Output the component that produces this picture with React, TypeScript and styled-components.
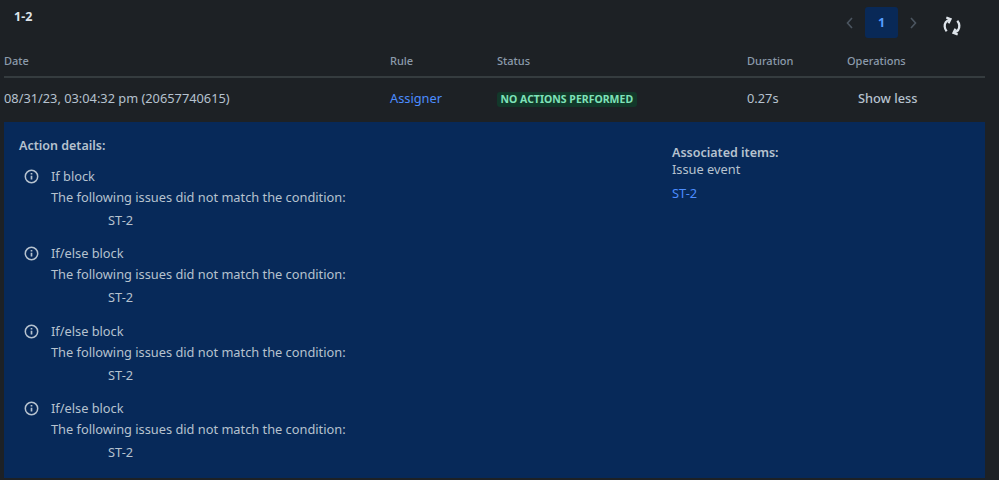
import React from "react";
import styled, { createGlobalStyle } from "styled-components";

const Global = createGlobalStyle`
  html, body { margin: 0; padding: 0; background: #1d2125; }
  body { font-family: "Noto Sans", "Open Sans", sans-serif; color: #b6c2cf; font-size: 12.8px; }
`;

const Page = styled.div`
  width: 999px;
  height: 480px;
  overflow: hidden;
  box-sizing: border-box;
  padding: 0 14px 0 4px;
`;

const TopBar = styled.div`
  display: flex;
  justify-content: space-between;
  height: 52px;
  padding-left: 10px;
`;

const Count = styled.div`
  font-weight: 700;
  font-size: 12.5px;
  line-height: 17px;
  padding-top: 8px;
  color: #dee4ea;
`;

const Pager = styled.div`
  display: flex;
  align-items: flex-start;
  padding-top: 7px;
  padding-right: 23px;
`;

const Arrow = styled.svg`
  width: 16px;
  height: 16px;
  margin-top: 8px;
  fill: none;
  stroke: #4b5560;
  stroke-width: 1.6;
`;

const PageBtn = styled.div`
  width: 33px;
  height: 31px;
  margin: 0 7px 0 7px;
  background: #092957;
  border-radius: 3px;
  color: #579dff;
  font-weight: 700;
  font-size: 12.5px;
  display: flex;
  align-items: center;
  justify-content: center;
`;

const Refresh = styled.svg`
  width: 20px;
  height: 20px;
  margin-left: 21px;
  margin-top: 9px;
  fill: none;
  stroke: #dee4ea;
  stroke-width: 2.3;
`;

const Row = styled.div<{ $head?: boolean }>`
  display: grid;
  box-sizing: border-box;
  grid-template-columns: 386px 107px 250px 100px 138px;
  align-items: center;
  height: ${(p) => (p.$head ? "26px" : "44px")};
  ${(p) =>
    p.$head
      ? "border-bottom: 2px solid #353c3f; font-size: 11px; font-weight: 500; color: #8c9bab;"
      : "font-size: 12.8px; padding-bottom: 4px;"}
`;

const HeadCell = styled.div`
  margin-top: -7px;
`;

const Link = styled.a`
  color: #4c8dff;
  text-decoration: none;
`;

const Lozenge = styled.span`
  display: inline-block;
  background: #12382a;
  color: #7ee2b8;
  font-size: 10.5px;
  font-weight: 700;
  line-height: 15px;
  padding: 0 3.5px;
  border-radius: 3px;
  white-space: nowrap;
`;

const ShowLess = styled.div`
  padding-left: 11px;
  font-weight: 500;
  color: #b6c2cf;
`;

const Panel = styled.div`
  height: 356px;
  background: #072959;
  display: flex;
  padding: 15px 15px 0;
  box-sizing: border-box;
`;

const LeftCol = styled.div`
  width: 653px;
`;

const Title = styled.div`
  font-weight: 600;
  font-size: 12.5px;
  line-height: 18px;
`;

const Action = styled.div`
  display: grid;
  grid-template-columns: 32px 1fr;
  font-size: 12.8px;
  height: 77.5px;
`;

const Actions = styled.div`
  margin-top: 10.6px;
`;

const IconWrap = styled.div`
  padding-left: 5px;
  padding-top: 3px;
  display: flex;
  align-items: flex-start;
`;

const Info = styled.svg`
  width: 15px;
  height: 15px;
  fill: none;
  stroke: #b6c2cf;
  stroke-width: 1.5;
`;

const BlockName = styled.div`
  line-height: 21px;
`;

const Message = styled.div`
  line-height: 21px;
`;

const Issue = styled.div`
  padding-left: 57px;
  line-height: 25px;
`;

const RightCol = styled.div`
  padding-top: 7px;
`;

const AssocTitle = styled.div`
  font-weight: 600;
  font-size: 12.5px;
  line-height: 17px;
`;

const AssocText = styled.div`
  line-height: 16px;
  margin-bottom: 7px;
`;

const InfoIcon = () => (
  <Info viewBox="0 0 15 15">
    <circle cx="7.5" cy="7.5" r="6.2" />
    <path d="M7.500 6.800v3.800M7.500 4v1.500" strokeWidth="1.7" />
  </Info>
);

const actions = ["If block", "If/else block", "If/else block", "If/else block"];

export default function App() {
  return (
    <Page>
      <Global />
      <TopBar>
        <Count>1-2</Count>
        <Pager>
          <Arrow viewBox="0 0 16 16"><path d="M10 3L5.500 8l4.500 5" /></Arrow>
          <PageBtn>1</PageBtn>
          <Arrow viewBox="0 0 16 16"><path d="M6 3l4.500 5L6 13" /></Arrow>
          <Refresh viewBox="0 0 20 20">
            <path d="M8 3.500C4.500 4.500 2.500 7 2.700 10.500c.1 1.800.8 3.400 2 4.800" />
            <path d="M4.300 1.500L8.500 3.200 6.500 7.200" />
            <path d="M12 16.500c3.500-1 5.500-3.500 5.300-7-.1-1.800-.8-3.400-2-4.800" />
            <path d="M15.700 18.500L11.500 16.800l2-4" />
          </Refresh>
        </Pager>
      </TopBar>
      <Row $head>
        <HeadCell>Date</HeadCell>
        <HeadCell>Rule</HeadCell>
        <HeadCell>Status</HeadCell>
        <HeadCell>Duration</HeadCell>
        <HeadCell>Operations</HeadCell>
      </Row>
      <Row>
        <div>08/31/23, 03:04:32 pm (20657740615)</div>
        <div><Link>Assigner</Link></div>
        <div><Lozenge>NO ACTIONS PERFORMED</Lozenge></div>
        <div>0.27s</div>
        <ShowLess>Show less</ShowLess>
      </Row>
      <Panel>
        <LeftCol>
          <Title>Action details:</Title>
          <Actions>
            {actions.map((a, i) => (
              <Action key={i}>
                <IconWrap><InfoIcon /></IconWrap>
                <div>
                  <BlockName>{a}</BlockName>
                  <Message>The following issues did not match the condition:</Message>
                  <Issue>ST-2</Issue>
                </div>
              </Action>
            ))}
          </Actions>
        </LeftCol>
        <RightCol>
          <AssocTitle>Associated items:</AssocTitle>
          <AssocText>Issue event</AssocText>
          <Link>ST-2</Link>
        </RightCol>
      </Panel>
    </Page>
  );
}
